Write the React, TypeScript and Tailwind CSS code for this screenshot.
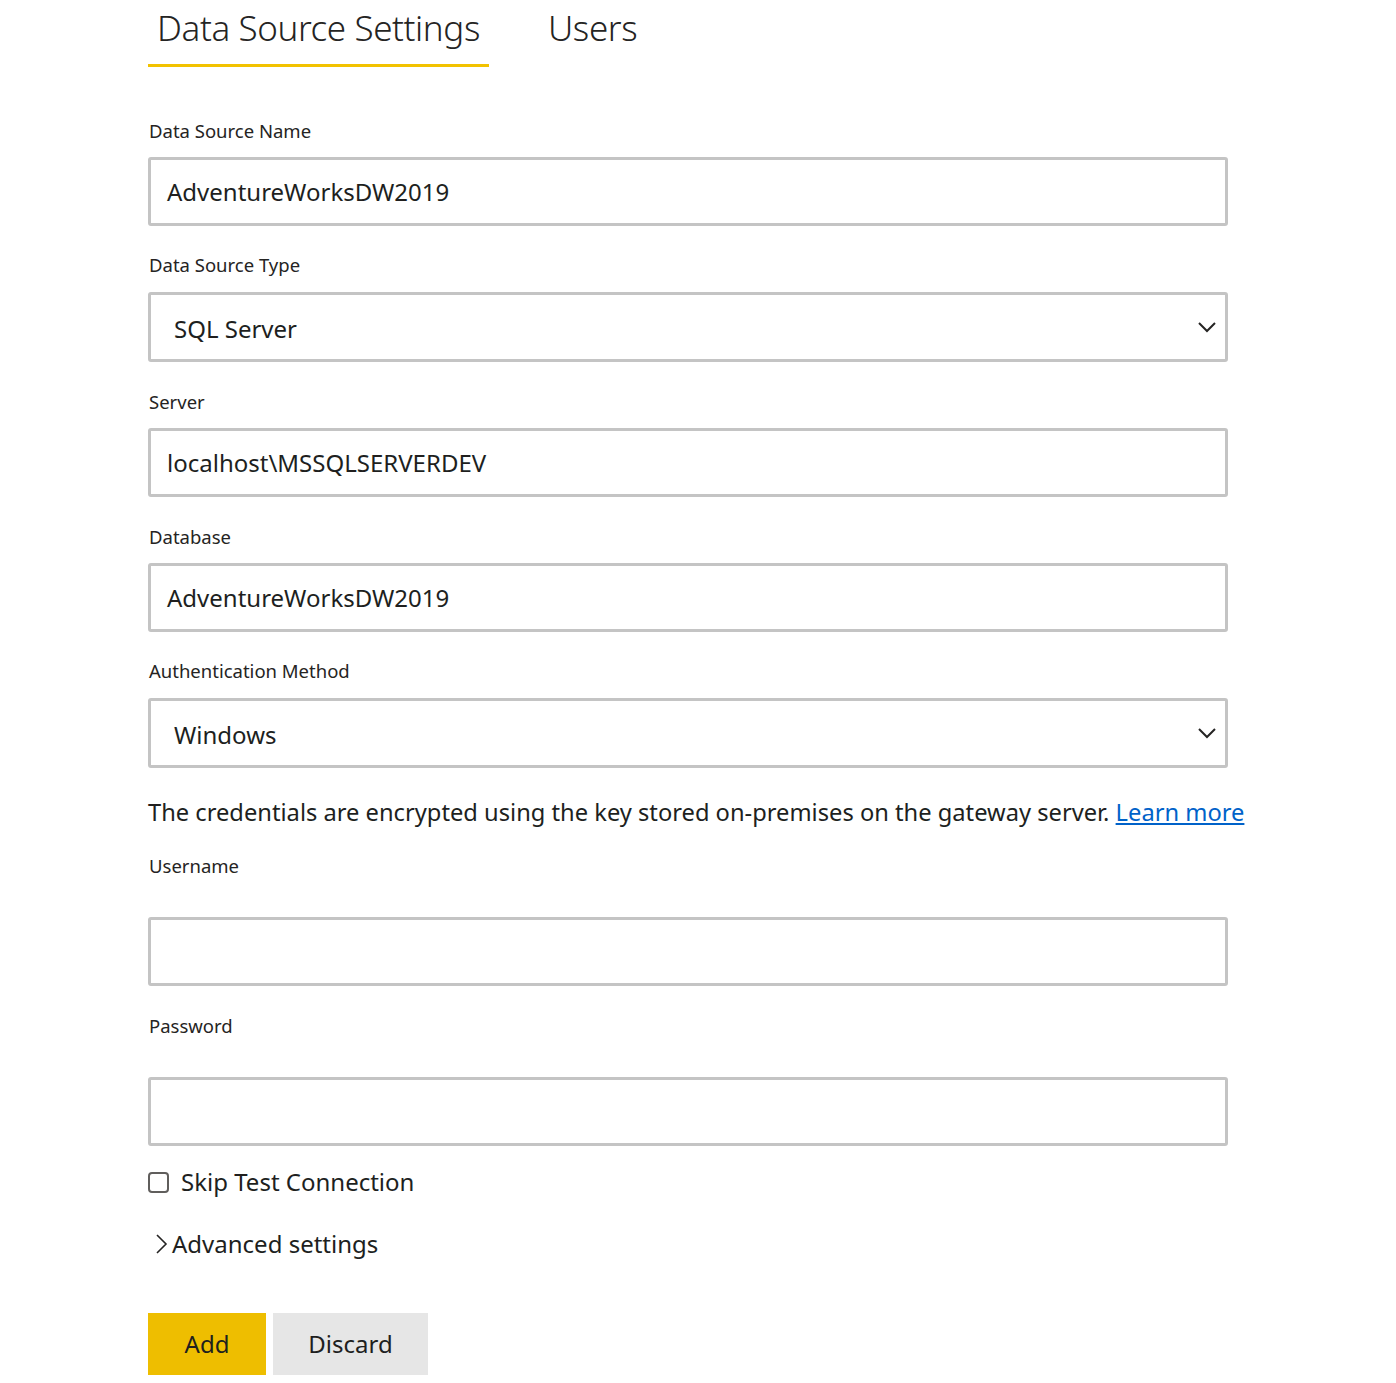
import React from 'react';

const font = { fontFamily: '"Noto Sans", "Open Sans", sans-serif' };

const Label: React.FC<{ text: string; className?: string }> = ({ text, className }) => (
    <div className={`text-[18.5px] leading-[24px] text-[#252423] pl-px ${className ?? ''}`}>{text}</div>
);

const TextBox: React.FC<{ value?: string }> = ({ value }) => (
    <div className="w-[1080px] h-[69px] border-[3px] border-[#c4c4c4] rounded-[3px] flex items-center px-[16px] text-[24px] text-[#201f1e]">
        {value}
    </div>
);

const Select: React.FC<{ value: string }> = ({ value }) => (
    <div className="w-[1080px] h-[70px] border-[3px] border-[#c4c4c4] rounded-[3px] flex items-center justify-between pl-[23px] pr-[8px] text-[24px] text-[#201f1e]">
        <span className="mt-[3px]">{value}</span>
        <svg width="20" height="12" viewBox="0 0 20 12" fill="none">
            <path d="M2 2l8 8 8-8" stroke="#252423" strokeWidth="2" />
        </svg>
    </div>
);

export default function App() {
    return (
        <div className="w-[1396px] min-h-[1383px] bg-white pl-[148px]" style={font}>
            {/* tabs */}
            <div className="flex items-start">
                <div className="w-[341px] h-[67px] border-b-[3px] border-[#f2c200] flex justify-center">
                    <span className="text-[35px] font-light leading-[56px] text-[#252423] tracking-[-0.4px]">Data Source Settings</span>
                </div>
                <span className="ml-[59px] text-[35px] font-light leading-[56px] text-[#252423] tracking-[-0.4px]">Users</span>
            </div>

            <Label text="Data Source Name" className="mt-[52px] mb-[14px]" />
            <TextBox value="AdventureWorksDW2019" />

            <Label text="Data Source Type" className="mt-[27px] mb-[15px]" />
            <Select value="SQL Server" />

            <Label text="Server" className="mt-[28px] mb-[14px]" />
            <TextBox value="localhost\MSSQLSERVERDEV" />

            <Label text="Database" className="mt-[28px] mb-[14px]" />
            <TextBox value="AdventureWorksDW2019" />

            <Label text="Authentication Method" className="mt-[27px] mb-[15px]" />
            <Select value="Windows" />

            <p className="mt-[28px] text-[23.7px] leading-[32px] text-[#201f1e] whitespace-nowrap">
                The credentials are encrypted using the key stored on-premises on the gateway server.{' '}
                <a href="#" className="text-[#0062c9] underline">Learn more</a>
            </p>

            <Label text="Username" className="mt-[26px] mb-[39px]" />
            <TextBox />

            <Label text="Password" className="mt-[28px] mb-[39px]" />
            <TextBox />

            <div className="mt-[20px] flex items-center">
                <span className="w-[21px] h-[21px] border-2 border-[#605e5c] rounded-[4px] inline-block" />
                <span className="ml-[12px] text-[24px] leading-[32px] text-[#201f1e]">Skip Test Connection</span>
            </div>

            <div className="mt-[30px] flex items-center">
                <svg width="18" height="22" viewBox="0 0 18 22" fill="none" className="ml-[5px] mr-[1px]">
                    <path d="M4 2l9 9-9 9" stroke="#252423" strokeWidth="1.6" />
                </svg>
                <span className="text-[24px] leading-[32px] text-[#201f1e]">Advanced settings</span>
            </div>

            <div className="mt-[53px] flex gap-[7px]">
                <button className="w-[118px] h-[62px] bg-[#eebe00] text-[24px] text-[#201f1e]">Add</button>
                <button className="w-[155px] h-[62px] bg-[#e6e6e6] text-[24px] text-[#201f1e]">Discard</button>
            </div>
        </div>
    );
}
